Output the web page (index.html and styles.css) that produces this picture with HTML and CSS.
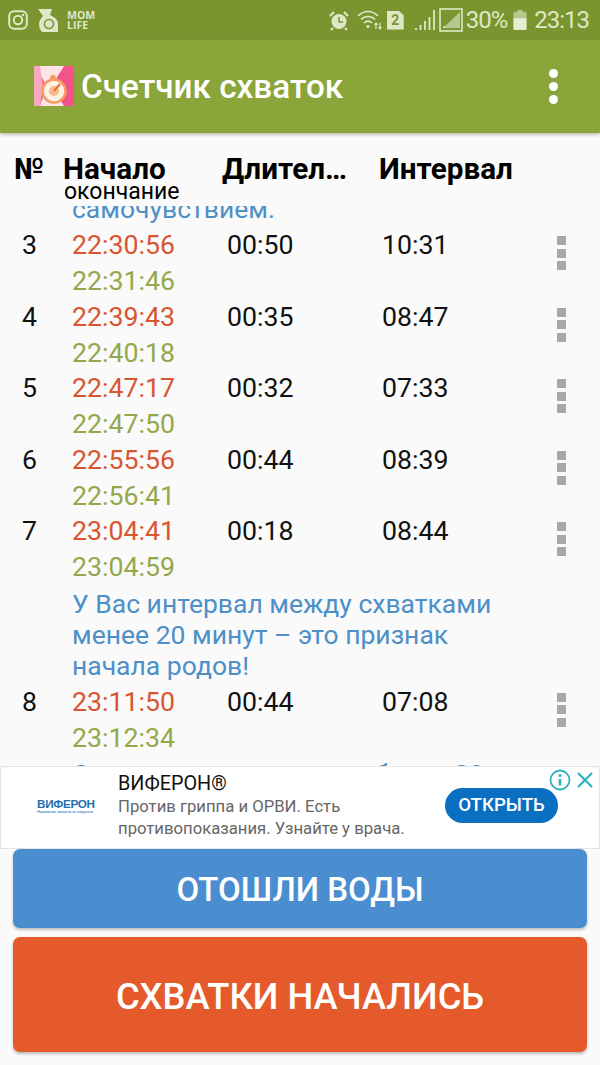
FILE: index.html
```html
<!DOCTYPE html>
<html lang="ru">
<head>
<meta charset="utf-8">
<title>Счетчик схваток</title>
<link rel="stylesheet" href="styles.css">
</head>
<body>
<div class="screen">
  <div class="status">
    <svg class="ic" width="20" height="20" viewBox="0 0 20 20"><rect x="1.2" y="1.2" width="17.6" height="17.6" rx="5" fill="none" stroke="#dfe8c6" stroke-width="2"/><circle cx="10" cy="10" r="4.2" fill="none" stroke="#dfe8c6" stroke-width="2"/><circle cx="15" cy="5" r="1.2" fill="#dfe8c6"/></svg>
    <svg class="ic ic-jar" width="20" height="23" viewBox="0 0 20 23"><path d="M0 0h14l-2 6c5 2 8 5 8 9v8H4c-2-2-3-5-3-8 0-3 2-6 4-8z" fill="#dfe8c6"/><circle cx="11" cy="15" r="4.500" fill="none" stroke="#7b9530" stroke-width="1.600"/></svg>
    <div class="momlife"><span>MOM</span><span>LIFE</span></div>
    <div class="spacer"></div>
    <svg class="ic" width="20" height="21" viewBox="0 0 20 21"><circle cx="10" cy="11.500" r="7.500" fill="#dfe8c6"/><path d="M10 7v5h4" fill="none" stroke="#7b9530" stroke-width="1.500"/><path d="M1 6l4-4M19 6l-4-4M4 18l-2 2M16 18l2 2" stroke="#dfe8c6" stroke-width="2.200"/></svg>
    <svg class="ic ic-wifi" width="26" height="20" viewBox="0 0 26 20"><path d="M1 6c6-6 14-6 20 0M4 9.500c4-4 10-4 14 0M7 13c2.500-2.500 5.500-2.500 8 0" fill="none" stroke="#dfe8c6" stroke-width="1.700"/><circle cx="11" cy="16.500" r="1.600" fill="#dfe8c6"/><path d="M19 13v6M23 19v-6M17.500 15l1.500-2 1.500 2M21.500 17l1.500 2 1.500-2" fill="none" stroke="#dfe8c6" stroke-width="1.200"/></svg>
    <div class="sim">2</div>
    <svg class="ic ic-bars" width="20" height="20" viewBox="0 0 20 20"><path d="M1 20v-2M5.500 20v-5M10 20v-9M14.500 20v-13M19 20V0" stroke="#dfe8c6" stroke-width="1.800" fill="none"/></svg>
    <svg class="ic" width="24" height="24" viewBox="0 0 24 24"><rect x="1" y="1" width="22" height="22" fill="none" stroke="#dfe8c6" stroke-width="1.600"/><path d="M4 20L21 4v16z" fill="#b6c890"/><path d="M5 20v-2" stroke="#dfe8c6" stroke-width="1.500"/></svg>
    <span class="pct">30%</span>
    <svg class="ic ic-batt" width="14" height="20" viewBox="0 0 14 22" preserveAspectRatio="none"><path d="M4.500 0h5v2h3a1 1 0 0 1 1 1v18a1 1 0 0 1-1 1H1.500a1 1 0 0 1-1-1V3a1 1 0 0 1 1-1h3z" fill="#b6c890"/><path d="M.5 9h13v12a1 1 0 0 1-1 1h-11a1 1 0 0 1-1-1z" fill="#e6edd2"/></svg>
    <span class="time">23:13</span>
  </div>
  <div class="toolbar">
    <svg class="logo" width="40" height="40" viewBox="0 0 40 40"><rect width="40" height="40" fill="#f4538a"/><path d="M0 0h30c-4 8-9 11-9 20s5 12 9 20H6c2-8 5-12 5-20S3 7 0 0z" fill="#fde3e6"/><path d="M0 0h6l3 20-3 20H0z" fill="#f8a9bd"/><circle cx="20" cy="25" r="11.500" fill="#fff0e0" stroke="#f59a5e" stroke-width="2.500"/><circle cx="19" cy="12" r="3" fill="#f59a5e"/><circle cx="20" cy="25" r="5" fill="#f9b98a"/><path d="M20 25l6-7" stroke="#e8702a" stroke-width="2"/></svg>
    <h1 class="title">Счетчик схваток</h1>
    <div class="overflow"><i></i><i></i><i></i></div>
  </div>
  <div class="head">
    <div class="c-num">№</div>
    <div class="c-start"><div class="h-main">Начало</div><div class="h-sub">окончание</div></div>
    <div class="c-dur">Длител…</div>
    <div class="c-int">Интервал</div>
  </div>
  <div class="list">
    <div class="list-inner">
      <div class="note note-top">самочувствием.</div>
      <div class="row"><div class="r-num">3</div><div class="r-times"><div class="t-start">22:30:56</div><div class="t-end">22:31:46</div></div><div class="r-dur">00:50</div><div class="r-int">10:31</div><div class="r-more"><i></i><i></i><i></i></div></div>
      <div class="row"><div class="r-num">4</div><div class="r-times"><div class="t-start">22:39:43</div><div class="t-end">22:40:18</div></div><div class="r-dur">00:35</div><div class="r-int">08:47</div><div class="r-more"><i></i><i></i><i></i></div></div>
      <div class="row"><div class="r-num">5</div><div class="r-times"><div class="t-start">22:47:17</div><div class="t-end">22:47:50</div></div><div class="r-dur">00:32</div><div class="r-int">07:33</div><div class="r-more"><i></i><i></i><i></i></div></div>
      <div class="row"><div class="r-num">6</div><div class="r-times"><div class="t-start">22:55:56</div><div class="t-end">22:56:41</div></div><div class="r-dur">00:44</div><div class="r-int">08:39</div><div class="r-more"><i></i><i></i><i></i></div></div>
      <div class="row"><div class="r-num">7</div><div class="r-times"><div class="t-start">23:04:41</div><div class="t-end">23:04:59</div></div><div class="r-dur">00:18</div><div class="r-int">08:44</div><div class="r-more"><i></i><i></i><i></i></div></div>
      <div class="note note-mid">У Вас интервал между схватками менее 20 минут – это признак начала родов!</div>
      <div class="row"><div class="r-num">8</div><div class="r-times"><div class="t-start">23:11:50</div><div class="t-end">23:12:34</div></div><div class="r-dur">00:44</div><div class="r-int">07:08</div><div class="r-more"><i></i><i></i><i></i></div></div>
      <div class="note note-last">Схватки продолжаются более 20</div>
    </div>
  </div>
  <div class="ad">
    <div class="ad-logo"><div class="ad-logo-name">ВИФЕРОН</div><div class="ad-logo-sub">Надежная защита от вирусов</div></div>
    <div class="ad-text"><div class="ad-name">ВИФЕРОН®</div><div class="ad-desc">Против гриппа и ОРВИ. Есть противопоказания. Узнайте у врача.</div></div>
    <div class="ad-open">ОТКРЫТЬ</div>
    <div class="ad-marks">
      <svg width="22" height="22" viewBox="0 0 22 22"><circle cx="11" cy="11" r="9.500" fill="none" stroke="#2db3bd" stroke-width="1.800"/><circle cx="11" cy="6.500" r="1.500" fill="#2db3bd"/><path d="M11 10v6.500" stroke="#2db3bd" stroke-width="2.600"/></svg>
      <svg width="18" height="18" viewBox="0 0 18 18"><path d="M2 2l14 14M16 2L2 16" stroke="#2db3bd" stroke-width="2.200"/></svg>
    </div>
  </div>
  <div class="actions">
    <div class="btn btn-water">ОТОШЛИ ВОДЫ</div>
    <div class="btn btn-start">СХВАТКИ НАЧАЛИСЬ</div>
  </div>
</div>
</body>
</html>
```
FILE: styles.css
```css
* { box-sizing: border-box; }
html, body { margin: 0; padding: 0; }
body { width: 600px; height: 1065px; overflow: hidden; background: #fafafa; font-family: Roboto, "Noto Sans", sans-serif; color: #111; }
.screen { display: flex; flex-direction: column; height: 1065px; }

.status { height: 40px; flex: none; background: #7a9530; display: flex; align-items: center; padding: 0 11px 0 8px; color: #dfe8c6; }
.ic { flex: none; display: block; }
.ic-jar { margin-left: 10px; }
.momlife { margin-left: 9px; display: flex; flex-direction: column; font: 700 10.500px/10px "Open Sans", sans-serif; color: #dfe8c6; }
.spacer { flex: 1; }
.ic-wifi { margin-left: 8px; }
.sim { width: 17px; height: 19px; margin-left: 4px; background: #dfe8c6; color: #7a9530; font: 700 14px/19px Roboto, sans-serif; text-align: center; clip-path: polygon(0 0, 70% 0, 100% 25%, 100% 100%, 0 100%); }
.ic-bars { margin-left: 11px; margin-right: 4px; }
.pct { margin-left: 3px; font-size: 24px; line-height: 40px; letter-spacing: -1px; }
.ic-batt { margin-left: 6px; }
.time { margin-left: 7px; font-size: 24px; line-height: 40px; letter-spacing: -1px; }

.toolbar { height: 93px; flex: none; background: #8aa63a; display: flex; align-items: center; padding: 0 42px 0 34px; box-shadow: 0 2px 3px rgba(0,0,0,.22); position: relative; z-index: 2; }
.logo { flex: none; margin-top: -1px; }
.title { margin: 0 0 0 7px; flex: 1; font-size: 33.300px; font-weight: 500; color: #fff; line-height: 40px; }
.overflow { display: flex; flex-direction: column; gap: 4px; }
.overflow i { width: 9px; height: 9px; border-radius: 50%; background: #fff; display: block; }

.head { height: 73px; flex: none; display: flex; padding: 20px 0 0 14px; position: relative; z-index: 1; }
.c-num, .h-main, .c-dur, .c-int { font-size: 29.700px; font-weight: 700; line-height: 32px; color: #000; white-space: nowrap; }
.c-num { width: 49px; }
.c-start { width: 159px; }
.c-dur { width: 157px; }
.h-sub { font-size: 23px; font-weight: 400; line-height: 20px; margin-top: -3px; padding-left: 1px; color: #000; white-space: nowrap; }

.list { flex: 1; min-height: 0; overflow: hidden; }
.list-inner { margin-top: -13px; }
.note { padding-left: 72px; padding-right: 90px; font-size: 26.500px; line-height: 31px; color: #4d8fc7; }
.note-top { height: 34px; }
.note-mid { padding-top: 3px; padding-bottom: 3px; }
.note-last { padding-top: 3px; padding-right: 0; white-space: nowrap; }
.row { display: flex; height: 71.500px; font-size: 26.700px; line-height: 36px; }
.r-num { width: 72px; padding-left: 22px; }
.r-times { width: 155px; }
.t-start { color: #d9552f; }
.t-end { color: #93a84a; }
.r-dur { width: 155px; }
.r-int { width: 175px; }
.r-more { display: flex; flex-direction: column; gap: 3.500px; padding-top: 9px; }
.r-more i { width: 9px; height: 9px; background: #a8a8a8; display: block; }

.ad { height: 83px; flex: none; background: #fff; border: 1px solid #e4e4e4; display: flex; position: relative; z-index: 1; padding-left: 117px; align-items: flex-start; }
.ad-logo { position: absolute; left: 36px; top: 31px; width: 60px; }
.ad-logo-name { font: 700 11.700px/12px "Liberation Sans", sans-serif; color: #1f6fb0; letter-spacing: -.3px; white-space: nowrap; }
.ad-logo-sub { font-size: 4px; line-height: 4px; color: #1f6fb0; white-space: nowrap; }
.ad-text { width: 310px; padding-top: 5px; }
.ad-name { font-size: 19.800px; line-height: 24px; color: #111; }
.ad-desc { font-size: 16.700px; line-height: 22px; color: #666; }
.ad-open { flex: none; margin: 21px 0 0 17px; width: 113px; height: 35px; border-radius: 18px; background: #0a6fc0; color: #fff; font-size: 18.600px; font-weight: 500; line-height: 35px; text-align: center; }
.ad-marks { position: absolute; right: 5px; top: 2px; display: flex; gap: 5px; align-items: center; }
.ad-marks svg { display: block; }

.actions { flex: none; height: 216px; padding: 0 13px; display: flex; flex-direction: column; gap: 9px; }
.btn { border-radius: 7px; color: #fff; display: flex; align-items: center; justify-content: center; font-weight: 500; box-shadow: 0 2px 3px rgba(0,0,0,.25); }
.btn-water { height: 79px; background: #4a8ecf; font-size: 33px; padding-top: 2px; }
.btn-start { height: 115px; background: #e55a2b; font-size: 36.300px; padding-top: 4px; }
```
